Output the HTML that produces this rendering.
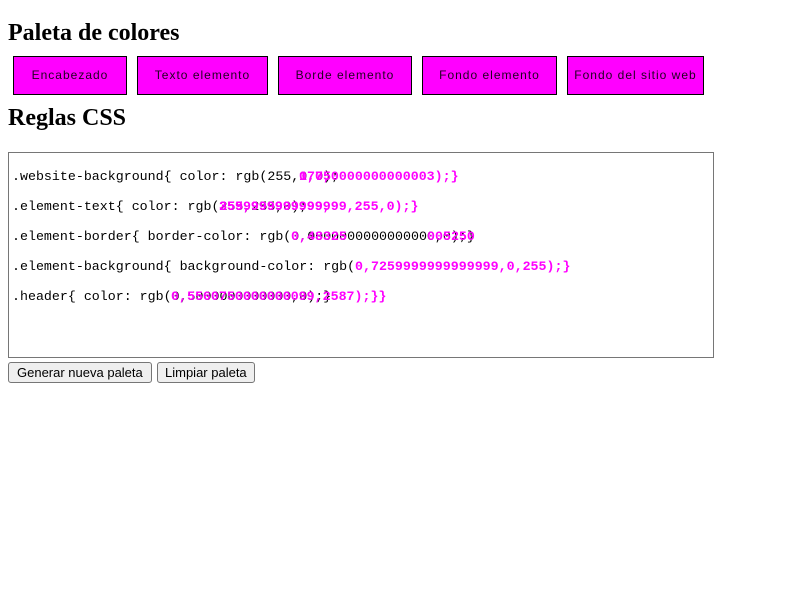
<!DOCTYPE html>
<html><head><style>
body{margin:0;background:#fff;font-family:"Liberation Serif",serif;position:relative;width:800px;height:600px;overflow:hidden}
h1{position:absolute;left:8px;margin:0;font-size:24px;font-weight:bold;color:#000;line-height:28px}
.box{position:absolute;top:56px;height:37px;background:#f0f;border:1px solid #000;font-family:"Liberation Sans",sans-serif;font-size:12px;color:#200020;line-height:37px;text-align:center;letter-spacing:1px}
.ta{position:absolute;left:8px;top:152px;width:704px;height:204px;border:1px solid #767676;background:#fff}
.ln{position:absolute;left:12px;font-family:"Liberation Mono",monospace;font-size:13.3px;color:#000;white-space:pre;line-height:16px}
.m{position:absolute;font-family:"Liberation Mono",monospace;font-size:13.3px;color:#f0f;white-space:pre;line-height:16px;font-weight:bold}
.btn{position:absolute;top:362px;height:21px;box-sizing:border-box;border:1px solid #767676;border-radius:3px;background:#efefef;font-family:"Liberation Sans",sans-serif;font-size:13px;line-height:19px;padding:0 7px;color:#000}
</style></head><body>
<h1 style="top:19px">Paleta de colores</h1>
<div class="box" style="left:13px;width:112px">Encabezado</div>
<div class="box" style="left:137px;width:129px">Texto elemento</div>
<div class="box" style="left:278px;width:132px">Borde elemento</div>
<div class="box" style="left:422px;width:133px">Fondo elemento</div>
<div class="box" style="left:567px;width:135px">Fondo del sitio web</div>
<h1 style="top:104px">Reglas CSS</h1>
<div class="ta"></div>
<div class="ln" style="top:169px">.website-background{ color: rgb(255,0,0);</div>
<div class="m" style="left:299px;top:169px">0,750000000000003);}</div>
<div class="m" style="left:299px;top:169px">170,</div>
<div class="ln" style="top:199px">.element-text{ color: rgb(255,255,0);</div>
<div class="m" style="left:219px;top:199px">255,999999999999,255,0);}</div>
<div class="m" style="left:219px;top:199px">3599999999999,</div>
<div class="ln" style="top:229px">.element-border{ border-color: rgb(0,0000000000000000,0);}</div>
<div class="m" style="left:291px;top:229px">0,48325</div>
<div class="m" style="left:427px;top:229px">005250</div>
<div class="ln" style="top:259px">.element-background{ background-color: rgb(</div>
<div class="m" style="left:355px;top:259px">0,7259999999999999,0,255);}</div>
<div class="ln" style="top:289px">.header{ color: rgb(0,5000000000000,0);}</div>
<div class="m" style="left:171px;top:289px">0,5560750000000099,2587);}}</div>
<div class="btn" style="left:8px;padding:0 8px">Generar nueva paleta</div>
<div class="btn" style="left:157px">Limpiar paleta</div>
</body></html>
